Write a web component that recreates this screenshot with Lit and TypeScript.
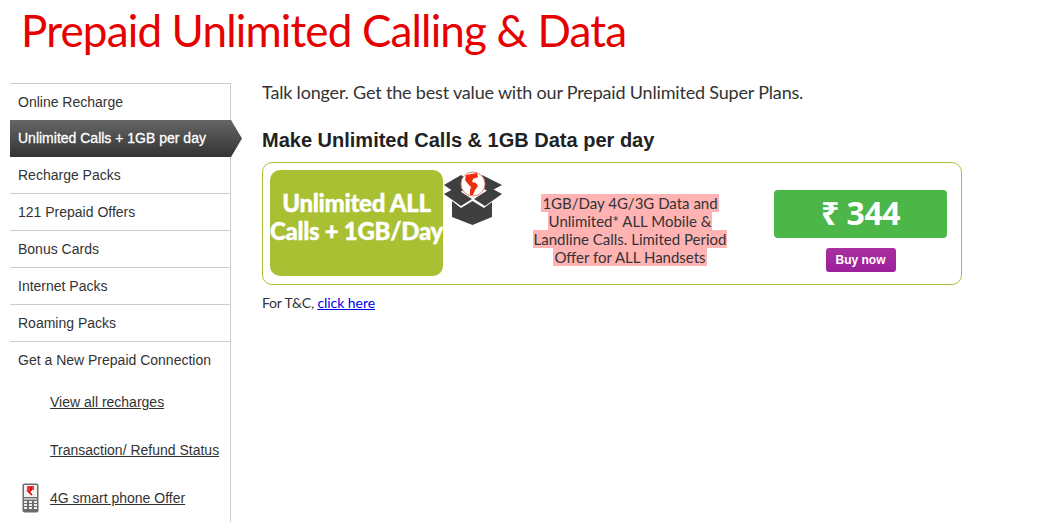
import { LitElement, html, css } from "lit";
import { customElement } from "lit/decorators.js";

@customElement("app-root")
export class AppRoot extends LitElement {
  static styles = css`
    :host { display: block; width: 1048px; height: 531px; overflow: hidden; background: #fff; font-family: "Liberation Sans", Arial, sans-serif; color: #333; }
    h1 { margin: 0; height: 83px; padding: 7px 0 0 21px; box-sizing: border-box; font: 400 44px/46px Lato, sans-serif; color: #e60000; letter-spacing: -0.84px; }
    .cols { display: flex; align-items: flex-start; }
    .side { margin-left: 10px; width: 221px; height: 439px; box-sizing: border-box; border-top: 1px solid #ccc; border-right: 1px solid #ccc; flex: none; display: flex; flex-direction: column; }
    .item { height: 37px; box-sizing: border-box; border-bottom: 1px solid #ccc; padding-left: 8px; font-size: 14px; line-height: 36px; color: #333; flex: none; }
    .item.first { height: 36px; border-bottom: none; }
    .item.plain { border-bottom: none; }
    .item.active { position: relative; height: 37px; width: 232px; border: none; color: #fff; -webkit-text-stroke: 0.3px #fff; line-height: 36px; background: linear-gradient(#666, #333); clip-path: polygon(0 0, 221px 0, 232px 50%, 221px 100%, 0 100%); }
    .links { display: flex; flex-direction: column; gap: 29px; padding-top: 14px; }
    .link { display: flex; align-items: center; padding-left: 40px; position: relative; height: 19px; }
    .link a { font-size: 14px; line-height: 19px; color: #333; text-decoration: underline; }
    .phone { position: absolute; left: 12px; top: -6px; width: 17px; height: 30px; }
    .main { margin-left: 31px; width: 700px; font-family: Lato, "Noto Sans", sans-serif; }
    .lead { margin: 0; font-size: 18px; line-height: 19px; color: #333; letter-spacing: -0.18px; }
    h2 { margin: 26px 0 0; font: 700 20px/24px "Liberation Sans", Arial, sans-serif; color: #222; }
    .card { margin-top: 10px; width: 700px; height: 123px; box-sizing: border-box; border: 1px solid #a9c037; border-radius: 10px; display: flex; align-items: flex-start; padding: 7px 0 0 7px; }
    .tile { width: 173px; height: 106px; flex: none; border-radius: 10px; background: #a9c032; color: #fff; font-weight: 900; -webkit-text-stroke: 0.4px #fff; font-size: 24px; line-height: 28px; letter-spacing: -0.3px; text-align: center; display: flex; align-items: center; justify-content: center; padding-bottom: 12px; white-space: nowrap; box-sizing: border-box; }
    .box { width: 60px; height: 58px; flex: none; }
    .desc { flex: none; width: 200px; margin-left: 27px; margin-top: 24px; text-align: center; font-size: 15px; line-height: 18px; color: #333; }
    .desc span { background: #ffb3b3; box-decoration-break: clone; -webkit-box-decoration-break: clone; padding: 0 1px; }
    .buy { flex: none; margin-left: 44px; margin-top: 20px; width: 173px; display: flex; flex-direction: column; align-items: center; }
    .price { width: 173px; height: 48px; border-radius: 4px; background: #4cb648; color: #fff; font: 700 32px/46px "Noto Sans", sans-serif; text-align: center; letter-spacing: -0.5px; }
    .btn { margin-top: 10px; width: 70px; height: 24px; border-radius: 3px; background: linear-gradient(#a9309f, #9c1f9b); color: #fff; font: 700 12px/24px "Liberation Sans", Arial, sans-serif; text-align: center; }
    .tc { margin: 9px 0 0; font-size: 14px; line-height: 18px; color: #333; letter-spacing: -0.2px; }
    .tc a { color: #00e; text-decoration: underline; letter-spacing: -0.05px; }
  `;

  private boxIcon() {
    return html`<svg class="box" viewBox="0 0 60 58" aria-hidden="true">
      <g fill="#3f3f3f">
        <path d="M1 15 L18 5 L31 14 L14 24 Z"/>
        <path d="M39 5 L59 15 L46 22 L33 14 Z"/>
        <path d="M1 24 L12 18 L29 29 L18 36 Z"/>
        <path d="M59 24 L48 18 L31 29 L42 36 Z"/>
        <path d="M9 31 L18 38 L29.5 31 L41 38 L49 32 L49 47 L29.5 55 L9 47 Z"/>
      </g>
      <circle cx="30" cy="14" r="12" fill="#fff" stroke="#e2806f" stroke-width="1"/>
      <path fill="#ee2d0a" d="M23 5 L34 3 L35 7 L30 9 L29 12 L33 13 L35 16 L32 20 L30 25 L27 25 L27 20 L28 17 L25 14 L22 10 Z"/>
    </svg>`;
  }

  private phoneIcon() {
    return html`<svg class="phone" viewBox="0 0 17 30" aria-hidden="true">
      <rect x="0.5" y="0.5" width="16" height="29" rx="2" fill="#6b6b6b"/>
      <rect x="2" y="2" width="13" height="12" fill="#f2f2f2"/>
      <path d="M5 4 H12 M5 6 H12 M8 4 Q11 6 8 8 H6 L10 12" fill="none" stroke="#e60000" stroke-width="1.6"/>
      <rect x="2" y="15" width="13" height="2" fill="#bbb"/>
      <g fill="#eee">
        <rect x="2" y="18" width="3" height="2"/><rect x="7" y="18" width="3" height="2"/><rect x="12" y="18" width="3" height="2"/>
        <rect x="2" y="21" width="3" height="2"/><rect x="7" y="21" width="3" height="2"/><rect x="12" y="21" width="3" height="2"/>
        <rect x="2" y="24" width="3" height="2"/><rect x="7" y="24" width="3" height="2"/><rect x="12" y="24" width="3" height="2"/>
      </g>
    </svg>`;
  }

  render() {
    return html`
      <h1>Prepaid Unlimited Calling &amp; Data</h1>
      <div class="cols">
        <nav class="side">
          <div class="item first">Online Recharge</div>
          <div class="item active">Unlimited Calls + 1GB per day</div>
          <div class="item">Recharge Packs</div>
          <div class="item">121 Prepaid Offers</div>
          <div class="item">Bonus Cards</div>
          <div class="item">Internet Packs</div>
          <div class="item">Roaming Packs</div>
          <div class="item plain">Get a New Prepaid Connection</div>
          <div class="links">
            <div class="link"><a href="#">View all recharges</a></div>
            <div class="link"><a href="#">Transaction/ Refund Status</a></div>
            <div class="link">${this.phoneIcon()}<a href="#">4G smart phone Offer</a></div>
          </div>
        </nav>
        <main class="main">
          <p class="lead">Talk longer. Get the best value with our Prepaid Unlimited Super Plans.</p>
          <h2>Make Unlimited Calls &amp; 1GB Data per day</h2>
          <div class="card">
            <div class="tile"><div>Unlimited ALL<br />Calls + 1GB/Day</div></div>
            ${this.boxIcon()}
            <div class="desc"><span>1GB/Day 4G/3G Data and Unlimited* ALL Mobile &amp; Landline Calls. Limited Period Offer for ALL Handsets</span></div>
            <div class="buy">
              <div class="price">₹ 344</div>
              <div class="btn">Buy now</div>
            </div>
          </div>
          <p class="tc">For T&amp;C, <a href="#">click here</a></p>
        </main>
      </div>
    `;
  }
}
